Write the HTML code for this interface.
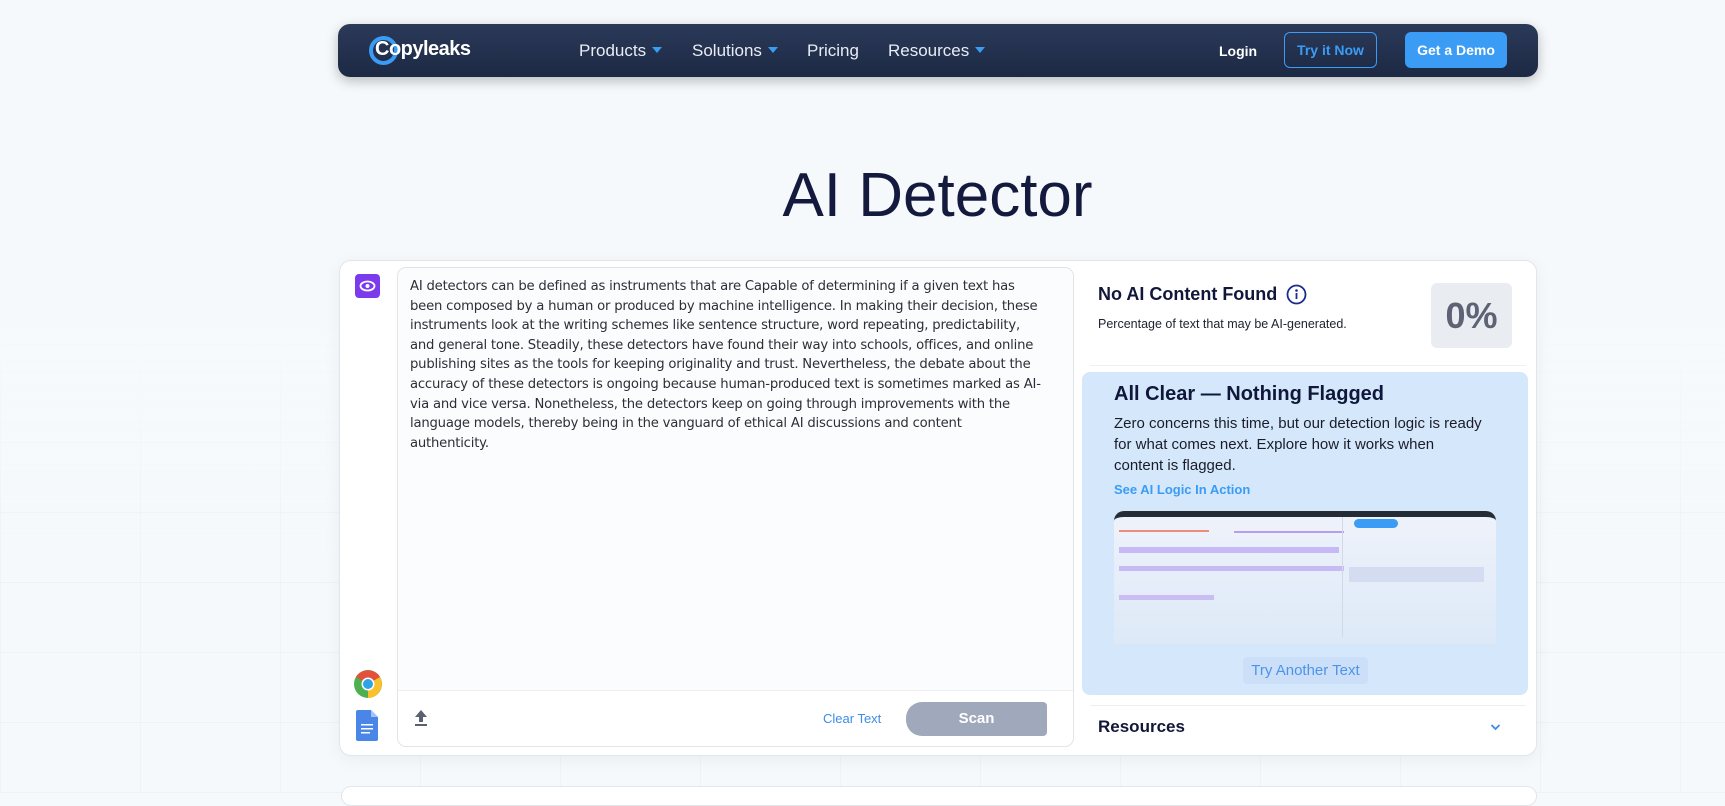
<!DOCTYPE html>
<html><head><meta charset="utf-8"><style>
*{box-sizing:border-box;margin:0;padding:0}
body{width:1725px;height:793px;overflow:hidden;font-family:"Liberation Sans",sans-serif;background:#f6f9fb;position:relative}
.grid{position:absolute;inset:0;background:
linear-gradient(#f7fafc 0,#f7fafc 330px,transparent 560px),
repeating-linear-gradient(0deg,#e9edf1 0 1px,transparent 1px 70px),
repeating-linear-gradient(90deg,#eceff3 0 1px,transparent 1px 140px);opacity:.55}
.a{position:absolute}
.nav{left:338px;top:24px;width:1200px;height:53px;border-radius:12px;background:linear-gradient(#2b3a59,#1c2944);box-shadow:0 4px 12px rgba(0,0,0,.25);color:#fff}
.nav .m{position:absolute;top:17px;font-size:17px;color:#e8ecf4}
.car{display:inline-block;width:0;height:0;border-left:5px solid transparent;border-right:5px solid transparent;border-top:6px solid #3b9cf5;margin-left:6px;vertical-align:3px}
h1{position:absolute;left:0;width:1875px;text-align:center;top:160px;font-size:62px;font-weight:400;color:#131a3d}
.card{left:339px;top:260px;width:1198px;height:496px;background:#fff;border:1px solid #e1e6ec;border-radius:12px;box-shadow:0 4px 18px rgba(0,0,0,.05)}
.ta{left:397px;top:267px;width:677px;height:480px;border:1px solid #e1e5ea;border-radius:9px;background:#fbfcfd}
.txt{left:410px;top:277px;font-size:13.2px;line-height:19.6px;color:#2c2f38;font-family:"DejaVu Sans","Liberation Sans",sans-serif;letter-spacing:-.2px}
</style></head><body>
<div class="grid"></div>
<div class="a nav">
 <div class="a" style="left:31px;top:12px;width:29px;height:29px;border-radius:50%;border:4px solid #3b9cf5"></div>
 <div class="a" style="left:37px;top:14px;font-size:20px;font-weight:bold;color:#fff;letter-spacing:-.5px">Copyleaks</div>
 <div class="m" style="left:241px">Products<span class="car"></span></div>
 <div class="m" style="left:354px">Solutions<span class="car"></span></div>
 <div class="m" style="left:469px">Pricing</div>
 <div class="m" style="left:550px">Resources<span class="car"></span></div>
 <div class="a" style="left:881px;top:19px;font-size:14px;font-weight:bold">Login</div>
 <div class="a" style="left:946px;top:8px;width:93px;height:36px;border:1px solid #3b9cf5;border-radius:6px;color:#3b9cf5;font-size:14px;font-weight:bold;text-align:center;line-height:34px">Try it Now</div>
 <div class="a" style="left:1067px;top:8px;width:102px;height:36px;background:#3b9cf5;border-radius:6px;font-size:14px;font-weight:bold;text-align:center;line-height:36px">Get a Demo</div>
</div>
<h1>AI Detector</h1>
<div class="a card"></div>
<div class="a" style="left:355px;top:274px;width:25px;height:24px;background:#7c3aed;border-radius:4px"><svg width="25" height="24" viewBox="0 0 25 24"><ellipse cx="12.5" cy="12" rx="7" ry="4.5" fill="none" stroke="#fff" stroke-width="1.8"/><circle cx="12.5" cy="12" r="2" fill="#fff"/></svg></div>
<svg class="a" style="left:352px;top:668px" width="32" height="32" viewBox="0 0 32 32"><circle cx="16" cy="16" r="14" fill="#4caf50"/><path d="M16 16 L4 9 A14 14 0 0 1 28 9Z" fill="#e4513a"/><path d="M16 16 L28 9 A14 14 0 0 1 16 30Z" fill="#fbc02d"/><circle cx="16" cy="16" r="6.5" fill="#fff"/><circle cx="16" cy="16" r="5" fill="#2fa4e7"/></svg>
<svg class="a" style="left:356px;top:710px" width="22" height="31" viewBox="0 0 22 31"><path d="M2 0h13l7 7v22a2 2 0 0 1-2 2H2a2 2 0 0 1-2-2V2a2 2 0 0 1 2-2z" fill="#4a86e8"/><path d="M15 0v7h7z" fill="#a1c2fa"/><rect x="5" y="14" width="12" height="1.5" fill="#fff"/><rect x="5" y="18" width="12" height="1.5" fill="#fff"/><rect x="5" y="22" width="9" height="1.5" fill="#fff"/></svg>
<div class="a ta"></div>
<div class="a" style="left:398px;top:690px;width:675px;height:56px;background:#fff;border-top:1px solid #eef0f3;border-radius:0 0 9px 9px"></div>
<div class="a txt">AI detectors can be defined as instruments that are Capable of determining if a given text has<br>been composed by a human or produced by machine intelligence. In making their decision, these<br>instruments look at the writing schemes like sentence structure, word repeating, predictability,<br>and general tone. Steadily, these detectors have found their way into schools, offices, and online<br>publishing sites as the tools for keeping originality and trust. Nevertheless, the debate about the<br>accuracy of these detectors is ongoing because human-produced text is sometimes marked as AI-<br>via and vice versa. Nonetheless, the detectors keep on going through improvements with the<br>language models, thereby being in the vanguard of ethical AI discussions and content<br>authenticity.</div>
<svg class="a" style="left:413px;top:709px" width="16" height="18" viewBox="0 0 16 18"><path d="M8 1 L14 8 H10 V13 H6 V8 H2Z" fill="#5b6170"/><rect x="2" y="15" width="12" height="2" fill="#5b6170"/></svg>
<div class="a" style="left:823px;top:711px;font-size:13px;color:#3b8de6">Clear Text</div>
<div class="a" style="left:906px;top:702px;width:141px;height:34px;background:#a0a9bb;border-radius:16px 4px 4px 16px;color:#fff;font-weight:bold;font-size:15px;text-align:center;line-height:34px">Scan</div>
<div class="a" style="left:1098px;top:284px;font-size:18px;font-weight:bold;color:#10173a">No AI Content Found</div>
<svg class="a" style="left:1286px;top:284px" width="21" height="21" viewBox="0 0 21 21"><circle cx="10.5" cy="10.5" r="9" fill="none" stroke="#1c2c8c" stroke-width="1.8"/><circle cx="10.5" cy="6.5" r="1.3" fill="#1c2c8c"/><rect x="9.6" y="9" width="1.8" height="6" fill="#1c2c8c"/></svg>
<div class="a" style="left:1098px;top:317px;font-size:12.5px;color:#1d2130">Percentage of text that may be AI-generated.</div>
<div class="a" style="left:1431px;top:283px;width:81px;height:65px;background:#e9edf1;border-radius:6px;color:#5d6274;font-weight:bold;font-size:36px;text-align:center;line-height:65px">0%</div>
<div class="a" style="left:1090px;top:365px;width:436px;height:1px;background:#edf0f3"></div>
<div class="a" style="left:1082px;top:372px;width:446px;height:323px;background:#d5e7fb;border-radius:8px"></div>
<div class="a" style="left:1114px;top:383px;font-size:20px;font-weight:bold;color:#10173a">All Clear — Nothing Flagged</div>
<div class="a" style="left:1114px;top:413px;font-size:15px;line-height:21px;color:#1a1d29">Zero concerns this time, but our detection logic is ready<br>for what comes next. Explore how it works when<br>content is flagged.</div>
<div class="a" style="left:1114px;top:482px;font-size:13px;font-weight:bold;color:#3b9cf5">See AI Logic In Action</div>
<div class="a" style="left:1114px;top:511px;width:382px;height:133px;border-radius:10px 10px 0 0;border-top:6px solid #262c36;background:linear-gradient(#eef2fa,#dde9f8)">
 <div class="a" style="left:5px;top:13px;width:90px;height:2px;background:#e88f7c"></div>
 <div class="a" style="left:120px;top:14px;width:110px;height:2px;background:#b79ef0"></div>
 <div class="a" style="left:240px;top:2px;width:44px;height:9px;border-radius:5px;background:#3b9cf5"></div>
 <div class="a" style="left:5px;top:30px;width:220px;height:6px;background:#c6b9f5"></div>
 <div class="a" style="left:5px;top:49px;width:225px;height:5px;background:#c7bbf5"></div>
 <div class="a" style="left:5px;top:78px;width:95px;height:5px;background:#c9bdf4"></div>
 <div class="a" style="left:228px;top:0;width:1px;height:120px;background:#d2d9e6"></div>
 <div class="a" style="left:235px;top:50px;width:135px;height:15px;background:#d4dcf1"></div>
</div>
<div class="a" style="left:1243px;top:657px;width:125px;height:27px;background:#cbe0f8;border-radius:4px;color:#4d94e8;font-size:15px;text-align:center;line-height:27px">Try Another Text</div>
<div class="a" style="left:1090px;top:705px;width:436px;height:1px;background:#edf0f3"></div>
<div class="a" style="left:1098px;top:717px;font-size:17px;font-weight:bold;color:#10173a">Resources</div>
<svg class="a" style="left:1490px;top:723px" width="11" height="8" viewBox="0 0 11 8"><path d="M1.5 2 L5.5 6 L9.5 2" fill="none" stroke="#3b8de6" stroke-width="1.8"/></svg>
<div class="a" style="left:341px;top:786px;width:1196px;height:20px;background:#fff;border:1px solid #e1e6ec;border-radius:12px"></div>
</body></html>
